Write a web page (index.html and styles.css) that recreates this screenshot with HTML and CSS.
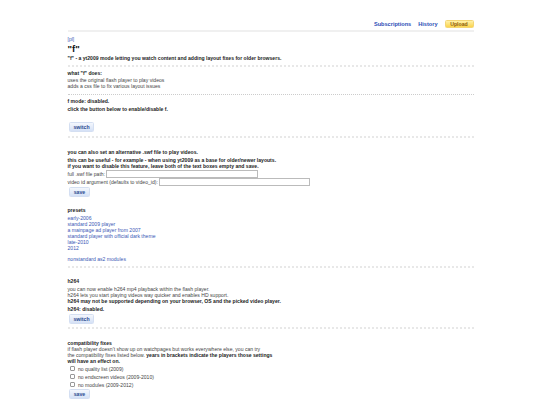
FILE: index.html
```html
<!DOCTYPE html>
<html lang="en">
<head>
<meta charset="utf-8">
<title>"f"</title>
<link rel="stylesheet" href="styles.css">
</head>
<body>
<div class="page">
  <nav class="nav">
    <a class="nav-link" href="#">Subscriptions</a>
    <a class="nav-link" href="#">History</a>
    <a class="upload" href="#">Upload</a>
  </nav>
  <div class="topline"></div>

  <section class="intro">
    <a class="link" href="#">[pl]</a>
    <h1>"f"</h1>
    <p class="b">"f" - a yt2009 mode letting you watch content and adding layout fixes for older browsers.</p>
  </section>

  <section class="sec thick what">
    <p class="b">what "f" does:</p>
    <p class="gap1">uses the original flash player to play videos</p>
    <p>adds a css file to fix various layout issues</p>
  </section>

  <section class="sec mode">
    <p class="b">f mode: disabled.</p>
    <p class="b gap2">click the button below to enable/disable f.</p>
    <button class="btn switch1">switch</button>
  </section>

  <section class="sec thick swf">
    <p class="b">you can also set an alternative .swf file to play videos.</p>
    <p class="b gap2">this can be useful - for example - when using yt2009 as a base for older/newer layouts.</p>
    <p class="b">if you want to disable this feature, leave both of the text boxes empty and save.</p>
    <div class="field f1"><label>full .swf file path:</label><input type="text"></div>
    <div class="field"><label>video id argument (defaults to video_id):</label><input type="text"></div>
    <button class="btn save">save</button>
    <p class="b presets">presets</p>
    <div class="links">
      <a class="link" href="#">early-2006</a>
      <a class="link" href="#">standard 2009 player</a>
      <a class="link" href="#">a mainpage ad player from 2007</a>
      <a class="link" href="#">standard player with official dark theme</a>
      <a class="link" href="#">late-2010</a>
      <a class="link" href="#">2012</a>
      <a class="link nonstd" href="#">nonstandard as2 modules</a>
    </div>
  </section>

  <section class="sec thick h264">
    <p class="b">h264</p>
    <p class="gap3">you can now enable h264 mp4 playback within the flash player.</p>
    <p>h264 lets you start playing videos way quicker and enables HD support.</p>
    <p class="b">h264 may not be supported depending on your browser, OS and the picked video player.</p>
    <p class="b gap2">h264: disabled.</p>
    <button class="btn switch2">switch</button>
  </section>

  <section class="sec thick compat">
    <p class="b">compatibility fixes</p>
    <p class="gap1">if flash player doesn't show up on watchpages but works everywhere else, you can try</p>
    <p>the compatibility fixes listed below. <b>years in brackets indicate the players those settings</b></p>
    <p class="b">will have an effect on.</p>
    <label class="check first"><input type="checkbox">no quality list (2009)</label>
    <label class="check"><input type="checkbox">no endscreen videos (2009-2010)</label>
    <label class="check"><input type="checkbox">no modules (2009-2012)</label>
    <button class="btn save last">save</button>
  </section>
</div>
</body>
</html>
```
FILE: styles.css
```css
html, body { margin: 0; padding: 0; background: #fff; }
body { font-family: "Liberation Sans", Arial, sans-serif; font-size: 5.08px; line-height: 6px; color: #444; overflow: hidden; height: 405px; }
.page { width: 406px; margin-left: 67.5px; }
p { margin: 0; }
.b, b { font-weight: bold; color: #222; }
a { text-decoration: none; }
.link { color: #3a57b5; }

.nav { height: 30px; display: flex; justify-content: flex-end; align-items: flex-end; font-weight: bold; }
.nav-link { color: #2a4db5; margin-right: 7px; margin-bottom: 3px; font-size: 5.6px; }
.upload { width: 29px; height: 8px; margin-bottom: 2px; box-sizing: border-box; text-align: center; line-height: 6.5px; color: #8a5a10; font-size: 5.2px; background: linear-gradient(#fff1a8, #fbd44e); border: 1px solid #f3d675; border-radius: 1.5px; }
.topline { height: 2px; background: #f0f0f0; }

.intro { padding-top: 4px; }
.intro .link { display: block; height: 6px; }
h1 { margin: 1px 0 0; font-size: 9.5px; line-height: 11px; color: #111; }
.intro .b { margin-top: 1px; }

.sec { border-top: 1px dotted #ccc; }
.thick { border-top: 2px dotted #e8e8e8; }
.what { margin-top: 4px; padding-top: 3px; }
.gap1 { margin-top: 0; }
.gap2 { margin-top: 2px; }
.gap3 { margin-top: 2px; }
.mode { margin-top: 5px; padding-top: 3px; }
.what .gap1 { margin-top: 1px; }

.btn { display: block; box-sizing: border-box; height: 10.5px; padding: 0; font: bold 5.2px "Liberation Sans", Arial, sans-serif; color: #2a4a90; background: linear-gradient(#f4f7fd, #d5e1f6); border: 1px solid #d4dff2; border-radius: 1.5px; margin-left: 1.5px; }
.btn.switch1, .btn.switch2 { width: 25px; }
.btn.save { width: 21px; }
.switch1 { margin-top: 9.5px; }
.swf { margin-top: 4px; padding-top: 10.5px; }
.field { display: flex; align-items: center; height: 8.5px; }
.field.f1 { margin-top: 1px; }
.field label { margin-right: 1px; }
.field input { box-sizing: border-box; width: 151.5px; height: 8px; padding: 0; border: 1px solid #bbb; background: #fff; border-radius: 0; }
.presets { margin-top: 10px; }
.links { margin-top: 1.5px; display: flex; flex-direction: column; align-items: flex-start; }
.nonstd { margin-top: 5.5px; }
.h264 { margin-top: 3.5px; padding-top: 10px; }
.switch2 { margin-top: 2px; }
.compat { margin-top: 3px; padding-top: 11px; }
.check { display: flex; align-items: center; height: 8px; }
.check.first { margin-top: 1px; }
.check input { box-sizing: border-box; width: 5.5px; height: 5.5px; margin: 0 3px 1px 2px; appearance: none; border: 1px solid #999; border-radius: 1px; background: #fff; }
.btn.last { margin-top: -0.5px; }
```
